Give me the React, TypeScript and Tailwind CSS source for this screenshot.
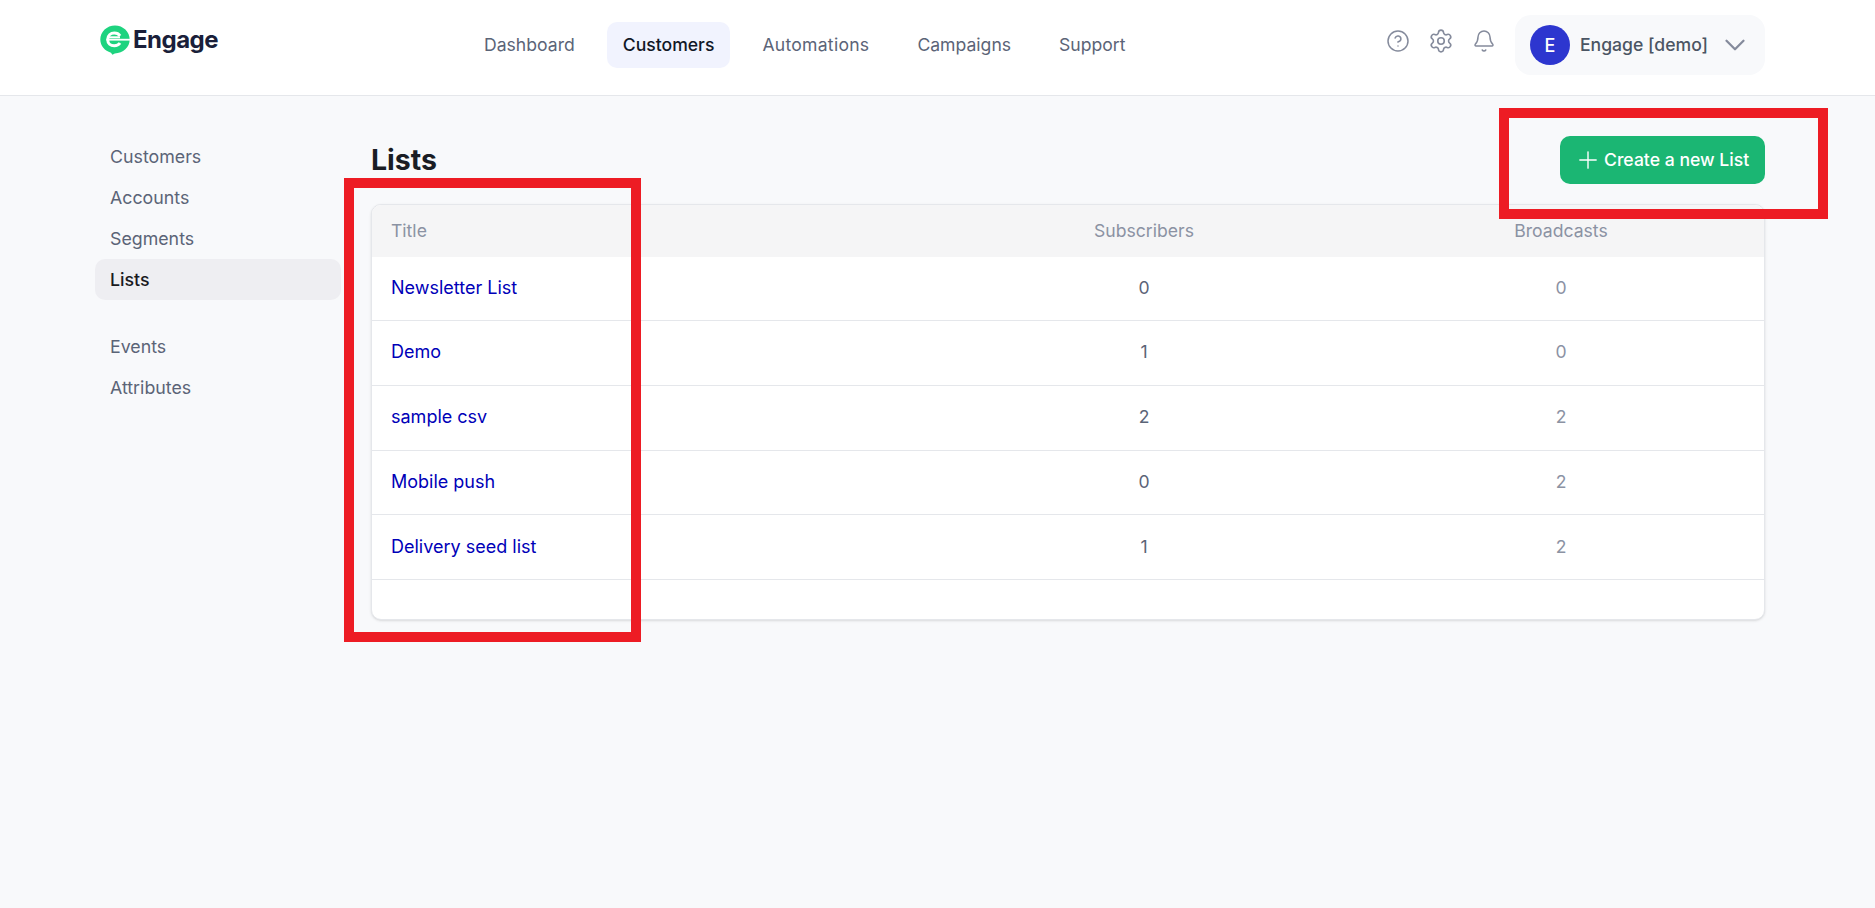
import { ChevronDown, Plus, Bell, Settings, CircleHelp } from "lucide-react"

const navItems = [
  { label: "Dashboard", className: "text-[#5b6477]" },
  { label: "Customers", className: "bg-[#f1f3fe] font-medium text-[#111827]" },
  { label: "Automations", className: "tracking-[0.25px] text-[#5b6477]" },
  { label: "Campaigns", className: "text-[#5b6477]" },
  { label: "Support", className: "text-[#5b6477]" },
]
const lists = [
  { title: "Newsletter List", subscribers: 0, broadcasts: 0 },
  { title: "Demo", subscribers: 1, broadcasts: 0 },
  { title: "sample csv", subscribers: 2, broadcasts: 2 },
  { title: "Mobile push", subscribers: 0, broadcasts: 2 },
  { title: "Delivery seed list", subscribers: 1, broadcasts: 2 },
]

function Logo() {
  return (
    <svg width="30" height="30" viewBox="0 0 30 30" className="shrink-0">
      <path d="M15 .5C6.900.5.300 6.800.300 14.600c0 6.300 4.500 11.400 10.700 13.200l1.400 1.900 2.400-1.300c8.300 0 14.900-6 14.900-13.800C29.700 6.800 23.100.5 15 .5Z" fill="#1ed37f" />
      <path d="M20 10.800C18.800 9 16.700 8 14.300 8 10.600 8 7.700 10.500 7.700 14.400s2.900 6.400 6.600 6.400c2.400 0 4.500-1 5.700-2.800" fill="none" stroke="#fff" strokeWidth="3" />
      <rect x="8" y="11.300" width="12" height="2" fill="#fff" />
      <rect x="6.500" y="13.800" width="23.500" height="1.800" fill="#fff" />
    </svg>
  )
}

function SideLink({ label, active }: { label: string; active?: boolean }) {
  return (
    <a className={`block h-[41px] rounded-[10px] px-[15px] text-[17.8px] leading-[41px] ${active ? "bg-[#eeeef2] font-medium text-[#1a1a1f]" : "text-[#5b6477]"}`}>
      {label}
    </a>
  )
}

export default function App() {
  return (
    <div className="relative min-h-[908px] bg-[#f8f9fb] text-[17.6px] font-['Inter',sans-serif]">
      <header className="flex h-[96px] items-center border-b border-[#e5e7eb] bg-white pb-[5px] pl-[100px] pr-[110px]">
        <div className="mb-[11px] flex w-[368px] items-center gap-[3px]">
          <Logo />
          <span className="text-[24px] font-bold tracking-[-0.5px] text-[#1a1f3a]">Engage</span>
        </div>
        <nav className="flex items-center gap-[16px]">
          {navItems.map((item) => (
            <a key={item.label} className={`flex h-[46px] items-center rounded-[10px] px-[16px] ${item.className}`}>
              {item.label}
            </a>
          ))}
        </nav>
        <div className="ml-auto flex items-center">
          <div className="mb-[8px] flex items-center">
            <CircleHelp size={24} strokeWidth={1.5} className="text-[#858b9c]" />
            <Settings size={26} strokeWidth={1.5} className="ml-[18px] text-[#858b9c]" />
            <Bell size={24} strokeWidth={1.5} className="ml-[18px] mr-[19px] text-[#858b9c]" />
          </div>
          <button className="flex h-[60px] w-[250px] items-center rounded-[16px] bg-[#f8f9fb] pl-[15px]">
            <span className="flex h-[40px] w-[40px] items-center justify-center rounded-full bg-[#2d36cf] text-[18px] font-medium text-white">E</span>
            <span className="ml-[10px] font-medium text-[#4b5563]">Engage [demo]</span>
            <ChevronDown size={34} strokeWidth={1.6} className="ml-[10px] text-[#858b9c]" />
          </button>
        </div>
      </header>

      <div className="flex pl-[95px] pr-[110px] pt-[40px]">
        <aside className="w-[246px] shrink-0">
          <div>
            <SideLink label="Customers" />
            <SideLink label="Accounts" />
            <SideLink label="Segments" />
            <SideLink label="Lists" active />
          </div>
          <div className="mt-[26px]">
            <SideLink label="Events" />
            <SideLink label="Attributes" />
          </div>
        </aside>

        <main className="ml-[30px] flex-1">
          <div className="flex h-[68px] items-start justify-between">
            <h1 className="pt-[3px] text-[28.5px] font-bold leading-[42px] text-[#1a1d24]">Lists</h1>
            <button className="flex h-[48px] w-[205px] items-center rounded-[10px] bg-[#1bb673] pl-[14px] font-medium text-white">
              <Plus size={28} strokeWidth={1.2} className="mr-[2px]" />
              Create a new List
            </button>
          </div>
          <div className="overflow-hidden rounded-[10px] border border-[#e5e7eb] bg-white shadow-sm">
            <div className="grid h-[52px] grid-cols-[558px_428px_1fr] items-center bg-[#f5f5f6] text-[#8b92a3]">
              <div className="pl-[19px]">Title</div>
              <div className="text-center">Subscribers</div>
              <div className="text-center">Broadcasts</div>
            </div>
            {lists.map((row, i) => (
              <div key={row.title} className={`grid grid-cols-[558px_428px_1fr] items-center border-b border-[#e5e7eb] pb-[2px] ${i === 0 ? "h-[64px]" : "h-[64.8px]"}`}>
                <a className="pl-[19px] text-[18px] text-[#0000b8]">{row.title}</a>
                <div className="pt-[1px] text-center text-[#5b6477]">{row.subscribers}</div>
                <div className="pt-[1px] text-center text-[#8b92a3]">{row.broadcasts}</div>
              </div>
            ))}
            <div className="h-[39px]" />
          </div>
        </main>
      </div>

      {/* annotation boxes drawn over the screenshot */}
      <div className="absolute left-[344px] top-[178px] h-[464px] w-[297px] border-[10px] border-[#ed1c24]" />
      <div className="absolute left-[1499px] top-[108px] h-[111px] w-[329px] border-[10px] border-[#ed1c24]" />
    </div>
  )
}
